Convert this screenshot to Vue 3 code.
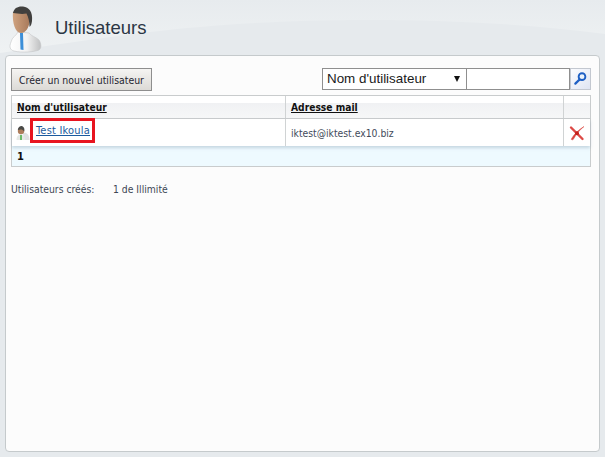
<template>
  <div class="page">
    <svg class="swoosh" viewBox="0 0 605 55" width="605" height="55" aria-hidden="true">
      <defs>
        <linearGradient id="sky" x1="0" y1="0" x2="0" y2="1">
          <stop offset="0" stop-color="#e7ebee" />
          <stop offset="1" stop-color="#eff2f3" />
        </linearGradient>
      </defs>
      <path d="M0 0H605V34C520 23 440 20 370 20C280 20 210 25 150 32C90 39 40 47 0 53Z" fill="url(#sky)" />
    </svg>
    <header class="head">
      <svg class="avatar" viewBox="0 0 44 54" width="44" height="54" aria-hidden="true">
        <defs>
          <linearGradient id="shirt" x1="0" y1="0" x2="1" y2="0">
            <stop offset="0" stop-color="#ffffff" />
            <stop offset=".55" stop-color="#f2f2f2" />
            <stop offset="1" stop-color="#bfc0c1" />
          </linearGradient>
          <linearGradient id="skin" x1="0" y1="0" x2="1" y2="0">
            <stop offset="0" stop-color="#cfa27f" />
            <stop offset="1" stop-color="#a87a5b" />
          </linearGradient>
        </defs>
        <path d="M18 32C16 36 12 37 11 42C9 47 10 50 14 51C22 53 34 52 39 50C42 48 41 43 39 40C36 37 31 36 29 33Z" fill="url(#shirt)" stroke="#c4c6c7" stroke-width=".6" />
        <path d="M20 33L23 33L23.500 50L20.500 49.500Z" fill="#3d8fd8" />
        <path d="M13 12C12 22 15 33 21 33C26 33 29 27 29.500 22L29.500 12Z" fill="url(#skin)" />
        <path d="M13 13C14 8 18 6 23 6.500C29 7 33 12 32 21C31.500 25 30.500 26 29.500 27C29.500 22 28.500 17 26.500 13.500C22 14.500 17 13.500 13 13Z" fill="#41403e" />
      </svg>
      <h1 class="title">Utilisateurs</h1>
    </header>

    <main class="panel">
      <div class="toolbar">
        <button class="create" type="button">Créer un nouvel utilisateur</button>
        <div class="search">
          <div class="select"><span>Nom d'utilisateur</span><i class="caret"></i></div>
          <div class="input"></div>
          <button class="go" type="button" aria-label="Rechercher">
            <svg viewBox="0 0 16 16" width="15" height="15">
              <circle cx="9.6" cy="6" r="3.6" fill="#eaf2fb" stroke="#1d5fc4" stroke-width="2" />
              <path d="M7 9L2.5 13.5" stroke="#1d5fc4" stroke-width="2.4" stroke-linecap="round" />
            </svg>
          </button>
        </div>
      </div>

      <div class="table">
        <div class="row heading">
          <div class="cell first"><span class="sort">Nom d'utilisateur</span></div>
          <div class="cell second"><span class="sort">Adresse mail</span></div>
          <div class="cell third"></div>
        </div>
        <div class="row body">
          <div class="cell first user">
            <svg class="mini" viewBox="0 0 14 16" width="14" height="16" aria-hidden="true">
              <path d="M7 8C10 7 13.500 9 13.500 15H8Z" fill="#dfe1e2" />
              <path d="M0.500 15C0.500 11 2.500 9.500 5 9.500C7.500 9.500 9 11.500 9 15Z" fill="#e6e9e6" />
              <path d="M4 10H6V15H4Z" fill="#6cbc6c" />
              <circle cx="5" cy="6" r="3.200" fill="#ad7d5c" />
              <path d="M1.800 5C2 2 4 0.800 6 1C8.300 2 8.800 4 8.200 6.500C7 4 4 4 1.800 5Z" fill="#4a4a48" />
            </svg>
            <a class="name" href="#" @click.prevent>Test Ikoula</a>
          </div>
          <div class="cell second mail">iktest@iktest.ex10.biz</div>
          <div class="cell third del">
            <svg viewBox="0 0 16 16" width="16" height="16" aria-label="Supprimer">
              <path d="M2 2.500L13.500 14" stroke="#dd4a46" stroke-width="2.400" fill="none" stroke-linecap="round" />
              <path d="M15 1.500C10 4.500 5 9 2.200 14.200C3 15.200 4.200 15 4.800 13.600C7 9.500 10.500 5 15 1.500Z" fill="#d8423d" stroke="#d8423d" stroke-width=".5" stroke-linejoin="round" />
              <circle cx="8" cy="8.200" r="2" fill="#c4211c" />
            </svg>
          </div>
        </div>
        <div class="pager"><b>1</b></div>
      </div>

      <p class="quota"><span>Utilisateurs créés:</span><span>1 de Illimité</span></p>
    </main>
  </div>
</template>

<script setup>
</script>

<style>
html, body { margin: 0; background: #e6eaed; }
</style>

<style scoped>
.page {
  position: relative;
  width: 605px;
  height: 457px;
  overflow: hidden;
  background: #e6eaed;
  box-sizing: border-box;
  padding: 0 5px;
  font-family: "DejaVu Sans Condensed", "DejaVu Sans", sans-serif;
  color: #2f3b4a;
}
.swoosh { position: absolute; left: 0; top: 0; }
.head { position: relative; height: 55px; display: flex; align-items: flex-start; }
.avatar { position: absolute; left: -5px; top: 0; }
.title {
  margin: 16px 0 0 50px;
  font: 400 18.500px/24px "Liberation Sans", Arial, sans-serif;
  color: #2b3644;
}
.panel {
  position: relative;
  box-sizing: border-box;
  width: 595px;
  height: 397px;
  background: #fcfcfc;
  border: 1px solid #c5cacc;
  border-radius: 4px;
  padding: 12px 8px 0 5px;
}
.toolbar { display: flex; justify-content: space-between; align-items: flex-start; height: 27px; }
.create {
  box-sizing: border-box;
  width: 141px;
  height: 23px;
  padding: 0;
  border: 1px solid #8e8e8e;
  background: linear-gradient(#f5f4f2, #dcdad6);
  font: 10.400px/20px "DejaVu Sans Condensed", "DejaVu Sans", sans-serif;
  color: #1f2430;
}
.search { display: flex; align-items: flex-start; }
.select {
  box-sizing: border-box;
  width: 145px;
  height: 22px;
  border: 1px solid #8f8f8f;
  background: #fff;
  padding-left: 4px;
  display: flex;
  align-items: center;
  justify-content: space-between;
  font: 13.400px/20px "Liberation Sans", Arial, sans-serif;
  color: #1a1a1a;
}
.caret {
  width: 0;
  height: 0;
  margin-right: 6px;
  border-left: 3.5px solid transparent;
  border-right: 3.5px solid transparent;
  border-top: 6px solid #111;
}
.input {
  box-sizing: border-box;
  width: 103px;
  height: 22px;
  border: 1px solid #8f8f8f;
  border-left: 0;
  background: #fff;
}
.go {
  box-sizing: border-box;
  width: 21px;
  height: 22px;
  padding: 2px 0 0;
  border: 1px solid #c3c8d0;
  background: linear-gradient(135deg, #fbfcff, #dfe5f2);
  display: flex;
  justify-content: center;
  align-items: flex-start;
}
.table {
  box-sizing: border-box;
  width: 580px;
  border: 1px solid #c9cccd;
  background: #fff;
}
.row { display: flex; box-sizing: border-box; border-bottom: 1px solid #c9cccd; }
.heading { height: 23px; background: linear-gradient(#fff 0 30%, #f0f1f3 30%, #f6f7f8); }
.body { height: 27px; border-bottom: 0; box-shadow: 0 2px 3px rgba(120, 150, 170, .35); position: relative; }
.cell { box-sizing: border-box; display: flex; align-items: center; border-right: 1px solid #d0d3d4; }
.first { width: 274px; padding-left: 5px; }
.second { width: 278px; padding-left: 5px; }
.third { flex: 1; border-right: 0; }
.sort {
  font: 700 10.200px/13px "DejaVu Sans Condensed", "DejaVu Sans", sans-serif;
  color: #111;
  text-decoration: underline;
}
.user { padding-left: 4px; }
.name {
  box-sizing: border-box;
  width: 65px;
  height: 25px;
  margin-top: -4px;
  padding: 0 0 0 3px;
  border: 3px solid #e8141f;
  font: 11px/20px "DejaVu Sans Condensed", "DejaVu Sans", sans-serif;
  letter-spacing: .2px;
  color: #1b5a9e;
  text-decoration: underline;
}
.mail { font: 10.300px/14px "DejaVu Sans Condensed", "DejaVu Sans", sans-serif; color: #3f4b5a; }
.del { justify-content: center; }
.pager {
  height: 20px;
  padding-left: 5px;
  background: #eefaff;
  font: 700 11px/22px "DejaVu Sans Condensed", "DejaVu Sans", sans-serif;
  color: #111;
}
.quota {
  display: flex;
  margin: 15px 0 0;
  font: 10.300px/14px "DejaVu Sans Condensed", "DejaVu Sans", sans-serif;
  color: #3c4654;
}
.quota span:first-child { width: 102px; }
</style>
